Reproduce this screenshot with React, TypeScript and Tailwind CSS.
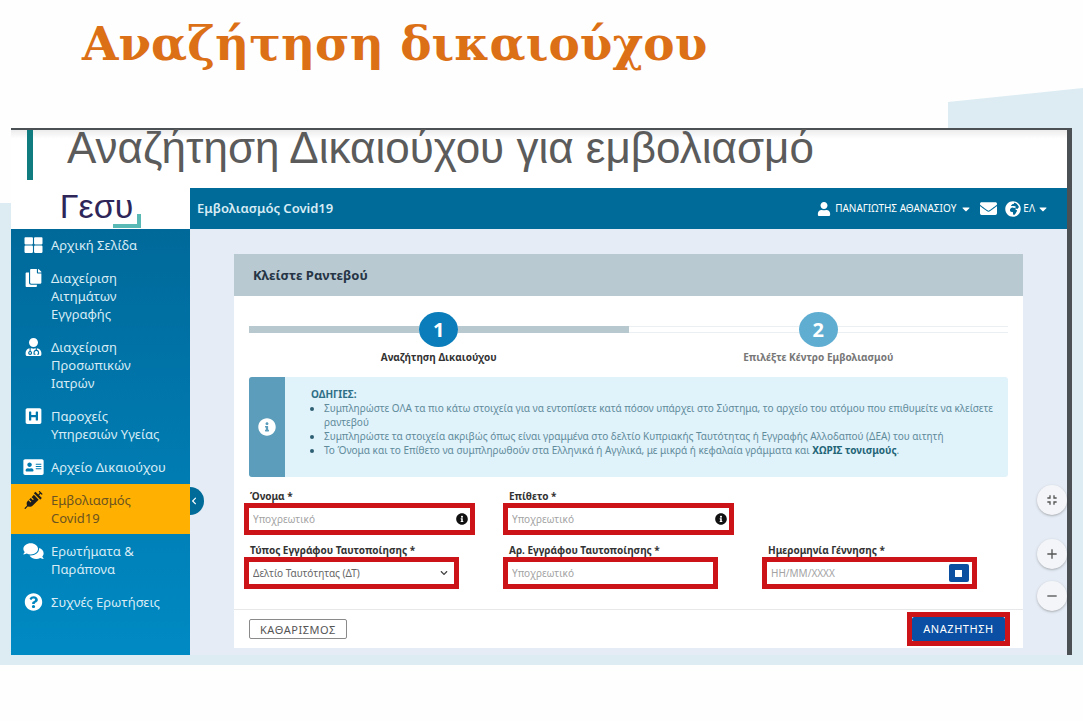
import React from 'react';
import {
  FaAddressCard,
  FaCaretDown,
  FaChevronDown,
  FaChevronLeft,
  FaComments,
  FaCopy,
  FaEnvelope,
  FaGlobeAfrica,
  FaHSquare,
  FaInfoCircle,
  FaQuestionCircle,
  FaSyringe,
  FaThLarge,
  FaUser,
  FaUserMd,
} from 'react-icons/fa';
import { MdAdd, MdFullscreenExit, MdRemove } from 'react-icons/md';

const navItems = [
  { icon: FaThLarge, label: 'Αρχική Σελίδα' },
  { icon: FaCopy, label: 'Διαχείριση Αιτημάτων Εγγραφής' },
  { icon: FaUserMd, label: 'Διαχείριση Προσωπικών Ιατρών' },
  { icon: FaHSquare, label: 'Παροχείς Υπηρεσιών Υγείας' },
  { icon: FaAddressCard, label: 'Αρχείο Δικαιούχου' },
  { icon: FaSyringe, label: 'Εμβολιασμός Covid19', active: true },
  { icon: FaComments, label: 'Ερωτήματα & Παράπονα' },
  { icon: FaQuestionCircle, label: 'Συχνές Ερωτήσεις' },
];

function Logo() {
  return (
    <div className="flex h-[41px] items-start justify-center bg-white">
      <div className="relative h-10 pr-2">
        <span className="block font-['Liberation_Sans',sans-serif] text-[34px] leading-9 text-[#2e2659]">Γεσυ</span>
        <span className="absolute right-0 bottom-0 h-[14px] w-7 border-r-4 border-b-4 border-[#58b9b5]" />
      </div>
    </div>
  );
}

function Sidebar() {
  return (
    <aside className="relative z-10 flex w-[179px] shrink-0 flex-col">
      <Logo />
      <nav className="flex flex-1 flex-col gap-px bg-gradient-to-b from-[#00699a] to-[#008ac4]">
        {navItems.map(({ icon: Icon, label, active }) => (
          <a
            key={label}
            href="#"
            className={
              active
                ? 'flex gap-[7px] bg-[#ffb000] py-[7px] pr-4 pl-3 text-[#6b5420]'
                : 'flex gap-[7px] py-[7px] pr-4 pl-3 text-[#d8ecf5]'
            }
          >
            <Icon
              className={active ? 'h-[18px] w-[21px] shrink-0 text-[#1d1d1d]' : 'h-[18px] w-[21px] shrink-0 text-white'}
            />
            <span className="text-[13px] leading-[18px]">{label}</span>
          </a>
        ))}
      </nav>
      <button
        aria-label="Σύμπτυξη μενού"
        className="absolute top-[299px] left-full flex h-7 w-[14px] items-center rounded-r-full bg-[#006b98] text-white"
      >
        <FaChevronLeft className="size-2" />
      </button>
    </aside>
  );
}

function TopBar() {
  return (
    <header className="flex h-[41px] items-center justify-between bg-[#006b98] pr-[18px] pl-[7px] text-white">
      <span className="text-[13px] font-semibold text-[#d8ecf5]">Εμβολιασμός Covid19</span>
      <div className="flex items-center gap-2 text-[10px]">
        <button className="flex items-center gap-1">
          <FaUser className="size-[14px]" />
          ΠΑΝΑΓΙΩΤΗΣ ΑΘΑΝΑΣΙΟΥ
          <FaCaretDown className="size-3" />
        </button>
        <button aria-label="Μηνύματα">
          <FaEnvelope className="size-[17px]" />
        </button>
        <button className="flex items-center gap-[2px]">
          <FaGlobeAfrica className="size-4" />
          ΕΛ
          <FaCaretDown className="size-3" />
        </button>
      </div>
    </header>
  );
}

function Stepper() {
  return (
    <ol className="mx-[15px] grid grid-cols-2 pt-4 text-[10px] leading-4 font-bold">
      <li className="flex flex-col items-center gap-[2px] text-[#333]">
        <div className="flex w-full items-center">
          <span className="h-[7px] flex-1 bg-[#b7c8cf]" />
          <span className="flex h-[35px] w-[39px] items-center justify-center rounded-[50%] bg-[#0a7dba] text-[20px] text-white">
            1
          </span>
          <span className="h-[7px] flex-1 bg-[#b7c8cf]" />
        </div>
        Αναζήτηση Δικαιούχου
      </li>
      <li className="flex flex-col items-center gap-[2px] text-[#777]">
        <div className="flex w-full items-center">
          <span className="h-[7px] flex-1 border-y border-[#eceff1]" />
          <span className="flex h-[35px] w-[39px] items-center justify-center rounded-[50%] bg-[#5faed2] text-[20px] text-white">
            2
          </span>
          <span className="h-[7px] flex-1 border-y border-[#eceff1]" />
        </div>
        Επιλέξτε Κέντρο Εμβολιασμού
      </li>
    </ol>
  );
}

function Instructions() {
  return (
    <div className="mx-[15px] mt-3 flex min-h-[100px] rounded-[3px] bg-[#e0f2fa] text-[10px] leading-[14px] text-[#5f8b9b]">
      <div className="flex w-9 shrink-0 items-center justify-center rounded-l-[3px] bg-[#5b9dba]">
        <FaInfoCircle className="size-[18px] text-white" />
      </div>
      <div className="flex-1 pt-[10px] pl-[26px]">
        <p className="font-bold text-[#2f6f87]">ΟΔΗΓΙΕΣ:</p>
        <ul className="list-disc pl-[13px] marker:text-[#2f5f73]">
          <li>
            Συμπληρώστε ΟΛΑ τα πιο κάτω στοιχεία για να εντοπίσετε κατά πόσον υπάρχει στο Σύστημα, το αρχείο του ατόμου
            που επιθυμείτε να κλείσετε ραντεβού
          </li>
          <li>
            Συμπληρώστε τα στοιχεία ακριβώς όπως είναι γραμμένα στο δελτίο Κυπριακής Ταυτότητας ή Εγγραφής Αλλοδαπού
            (ΔΕΑ) του αιτητή
          </li>
          <li>
            Το Όνομα και το Επίθετο να συμπληρωθούν στα Ελληνικά ή Αγγλικά, με μικρά ή κεφαλαία γράμματα και{' '}
            <strong className="text-[#1f6577]">ΧΩΡΙΣ τονισμούς</strong>.
          </li>
        </ul>
      </div>
    </div>
  );
}

type FieldProps = {
  id: string;
  label: string;
  wide?: boolean;
  children: React.ReactNode;
};

function Field({ id, label, wide, children }: FieldProps) {
  return (
    <div>
      <label htmlFor={id} className="block pl-[6px] text-[10px] leading-[14px] font-bold text-[#333]">
        {label}
      </label>
      <div
        className={
          wide
            ? 'flex h-8 w-[89%] items-center border-[5px] border-[#cc1418] bg-white pl-1'
            : 'flex h-8 w-[83%] items-center border-[5px] border-[#cc1418] bg-white pl-1'
        }
      >
        {children}
      </div>
    </div>
  );
}

function SearchForm() {
  const inputClass = 'min-w-0 flex-1 text-[10px] text-[#555] outline-none placeholder:text-[#a3a3a3]';
  return (
    <form>
      <div className="grid grid-cols-3 gap-y-2 pt-3 pr-[2px] pb-5 pl-[10px]">
        <Field id="name" label="Όνομα *" wide>
          <input id="name" placeholder="Υποχρεωτικό" className={inputClass} />
          <FaInfoCircle className="mr-[2px] size-3 text-[#111]" />
        </Field>
        <Field id="surname" label="Επίθετο *" wide>
          <input id="surname" placeholder="Υποχρεωτικό" className={inputClass} />
          <FaInfoCircle className="mr-[2px] size-3 text-[#111]" />
        </Field>
        <div />
        <Field id="doctype" label="Τύπος Εγγράφου Ταυτοποίησης *">
          <select id="doctype" className="min-w-0 flex-1 appearance-none text-[10px] text-[#666] outline-none">
            <option>Δελτίο Ταυτότητας (ΔΤ)</option>
          </select>
          <FaChevronDown className="mr-[6px] size-2 text-[#444]" />
        </Field>
        <Field id="docnumber" label="Αρ. Εγγράφου Ταυτοποίησης *">
          <input id="docnumber" placeholder="Υποχρεωτικό" className={inputClass} />
        </Field>
        <Field id="birthdate" label="Ημερομηνία Γέννησης *">
          <input id="birthdate" placeholder="ΗΗ/ΜΜ/ΧΧΧΧ" className={inputClass} />
          <button
            type="button"
            aria-label="Ημερολόγιο"
            className="mr-[3px] flex h-[18px] w-5 items-center justify-center rounded-[2px] bg-[#0a4fa0]"
          >
            <span className="size-[7px] bg-white" />
          </button>
        </Field>
      </div>
      <div className="flex items-center justify-between border-t border-[#e6e8ea] py-[2px] pr-[13px] pl-[15px]">
        <button
          type="reset"
          className="h-5 w-[98px] rounded-[2px] border border-[#8a8a8a] text-[11px] leading-none tracking-wider text-[#555]"
        >
          ΚΑΘΑΡΙΣΜΟΣ
        </button>
        <div className="flex border-[5px] border-[#cc1418]">
          <button type="submit" className="h-6 w-[93px] rounded-[2px] bg-[#0a4fa3] text-[11px] tracking-wider text-white">
            ΑΝΑΖΗΤΗΣΗ
          </button>
        </div>
      </div>
    </form>
  );
}

function ZoomControls() {
  const buttonClass =
    'flex size-[30px] items-center justify-center rounded-full bg-[#f4f5f8] text-[#555] shadow-sm shadow-black/20';
  return (
    <div className="absolute right-0 bottom-11 flex flex-col items-center">
      <button aria-label="Προσαρμογή" className={buttonClass}>
        <MdFullscreenExit className="size-4" />
      </button>
      <button aria-label="Μεγέθυνση" className={buttonClass + ' mt-6'}>
        <MdAdd className="size-4" />
      </button>
      <button aria-label="Σμίκρυνση" className={buttonClass + ' mt-3'}>
        <MdRemove className="size-4" />
      </button>
    </div>
  );
}

export default function App() {
  return (
    <div className="min-h-screen bg-[#fefefe] font-['Noto_Sans',sans-serif]">
      <div className="relative pb-[10px]">
        {/* Slide backdrop */}
        <svg
          className="absolute inset-0 h-full w-full"
          viewBox="0 0 1083 665"
          preserveAspectRatio="none"
          aria-hidden="true"
        >
          <path d="M0 203 L500 203 L948 300 L948 102 L1083 88 L1083 665 L0 665 Z" fill="#dcecf2" />
        </svg>

        <div className="relative">
          <h1 className="px-[82px] pt-3 pb-[52px] font-['DejaVu_Serif',serif] text-[47px] leading-[64px] font-bold text-[#dc7016]">
            Αναζήτηση δικαιούχου
          </h1>

          <div className="mr-[11px] ml-[11px] border-t-2 border-r-[5px] border-[#4b5055]">
            <div className="flex items-start bg-gradient-to-b from-[#ececec] via-white via-15% to-white pb-2 pl-4">
              <span className="h-[50px] w-[6px] bg-[#117c80]" />
              <h2 className="pl-[34px] font-['Liberation_Sans',sans-serif] text-[44px] leading-9 text-[#5b5b5b]">
                Αναζήτηση Δικαιούχου για εμβολιασμό
              </h2>
            </div>

            <div className="flex">
              <Sidebar />
              <main className="relative flex-1 bg-[#e5ecf5]">
                <TopBar />
                <div className="pt-[25px] pr-[44px] pb-[7px] pl-[44px]">
                  <section className="bg-white">
                    <h3 className="bg-[#b9c9d2] px-[19px] text-[13px] leading-[42px] font-bold text-[#263545]">
                      Κλείστε Ραντεβού
                    </h3>
                    <Stepper />
                    <Instructions />
                    <SearchForm />
                  </section>
                </div>
                <ZoomControls />
              </main>
            </div>
          </div>
        </div>
      </div>
    </div>
  );
}
